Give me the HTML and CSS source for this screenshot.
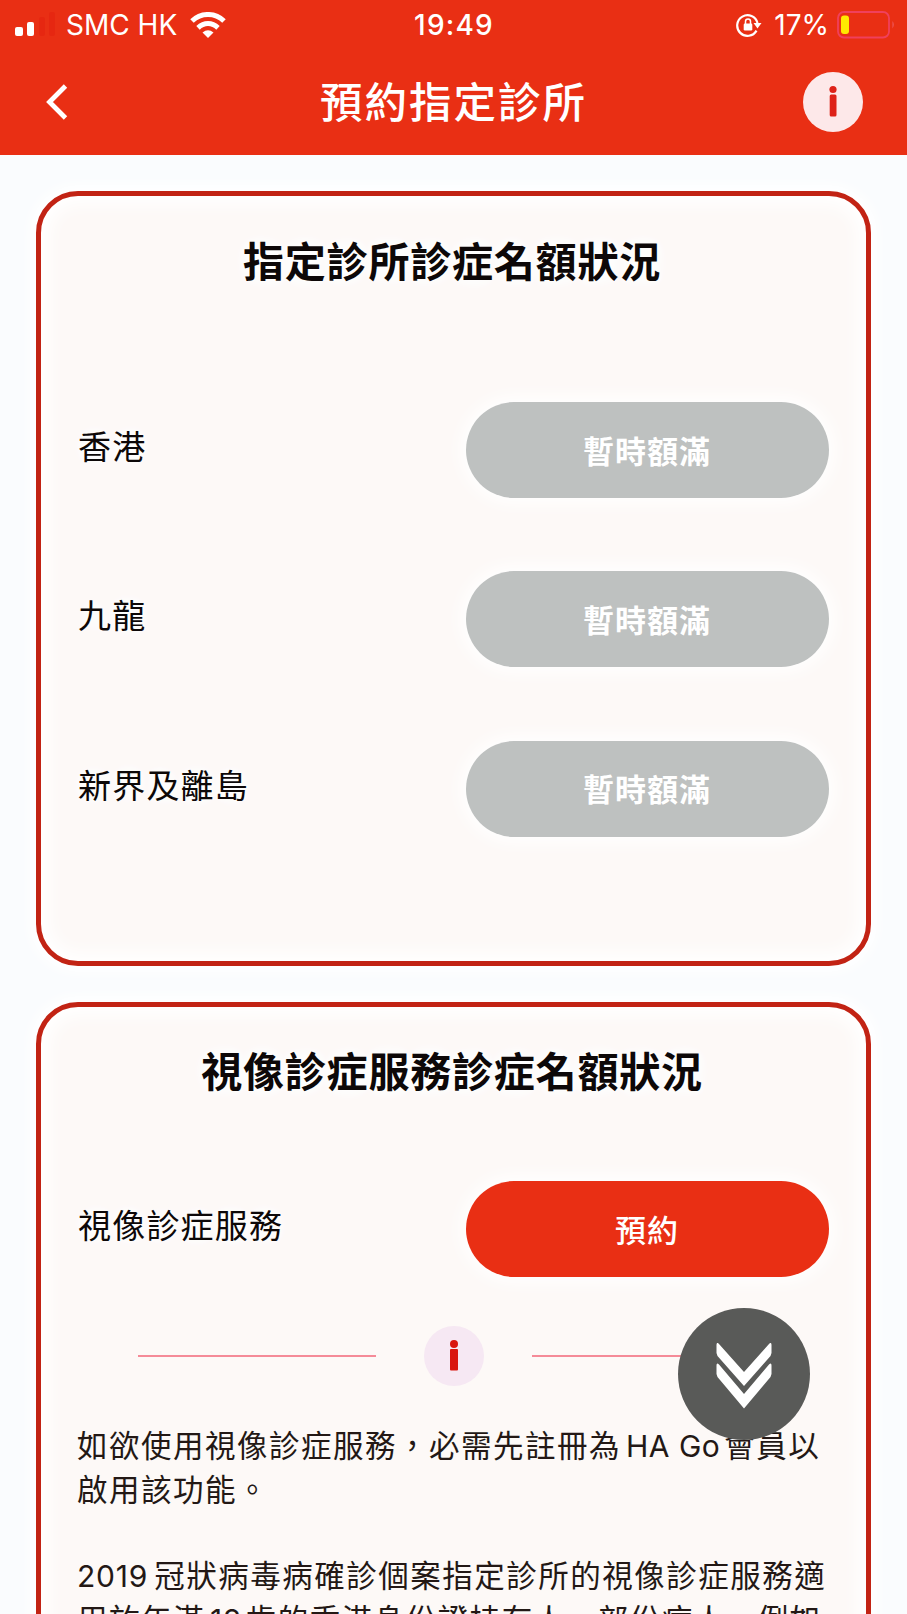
FILE: index.html
```html
<!DOCTYPE html>
<html lang="zh-Hant-HK">
<head>
  <meta charset="UTF-8" />
  <meta name="viewport" content="width=device-width, initial-scale=1.0" />
  <title>預約指定診所</title>
  <link rel="stylesheet" href="styles.css">
</head>
<body>
  <header class="header">
    <div class="status-bar">
      <div class="status-left">
        <svg class="signal" width="42" height="26" viewBox="0 0 42 26">
          <rect x="0" y="15" width="8" height="9" rx="2" fill="#fff" />
          <rect x="12" y="10" width="7" height="14" rx="2" fill="#fff" />
          <rect x="24" y="5" width="6" height="19" rx="2" fill="#e62711" />
          <rect x="34" y="0" width="6" height="24" rx="2" fill="#e62711" />
        </svg>
        <span class="carrier">SMC HK</span>
        <svg class="wifi" width="36" height="26" viewBox="0 0 36 26">
          <path d="M2 9 C11 .3 25 .3 34 9" fill="none" stroke="#fff" stroke-width="5" />
          <path d="M8 15.8 C14 10.2 22 10.2 28 15.8" fill="none" stroke="#fff" stroke-width="5" />
          <path d="M12.5 20.5 Q18 16 23.5 20.5 L18 26 Z" fill="#fff" />
        </svg>
      </div>
      <span class="time">19:49</span>
      <div class="status-right">
        <svg class="lock" width="26" height="24" viewBox="0 0 26 24">
          <path d="M20.5 17.6 A10.3 10.3 0 1 1 21.5 10" fill="none" stroke="#fff" stroke-width="2.2" />
          <path d="M17.5 10 H25.5 L21.5 15.5 Z" fill="#fff" />
          <rect x="7.7" y="10.5" width="8.6" height="7" rx="1.2" fill="#fff" />
          <path d="M9.5 11 V8.5 A2.5 2.5 0 0 1 14.5 8.5 V11" fill="none" stroke="#fff" stroke-width="1.5" />
        </svg>
        <span class="percent">17%</span>
        <svg class="battery" width="58" height="28" viewBox="0 0 58 28">
          <rect x="1" y="1" width="51" height="25.5" rx="6" fill="none" stroke="#f0405c" stroke-width="1.8" />
          <rect x="4" y="4.5" width="8" height="18.5" rx="3" fill="#ffe900" />
          <path d="M55.5 10 Q58 13.7 55.5 17.5 Z" fill="#ee5a60" />
        </svg>
      </div>
    </div>
    <nav class="nav">
      <svg class="back" width="22" height="36" viewBox="0 0 22 36">
        <path d="M19.5 2 L3.5 18 L19.5 34" fill="none" stroke="#fff" stroke-width="4.8" />
      </svg>
      <h1>預約指定診所</h1>
      <svg class="info-btn" width="60" height="60" viewBox="0 0 60 60">
        <circle cx="30" cy="30" r="30" fill="#fde8e9" />
        <circle cx="30" cy="17.5" r="3.6" fill="#de2118" />
        <rect x="26.7" y="22.5" width="6.8" height="22" rx="1.5" fill="#de2118" />
      </svg>
    </nav>
  </header>

  <main class="content">
    <section class="card">
      <h2>指定診所診症名額狀況</h2>
      <div class="rows">
        <div class="row">
          <span class="label">香港</span>
          <button class="btn full" type="button">暫時額滿</button>
        </div>
        <div class="row">
          <span class="label">九龍</span>
          <button class="btn full" type="button">暫時額滿</button>
        </div>
        <div class="row">
          <span class="label">新界及離島</span>
          <button class="btn full" type="button">暫時額滿</button>
        </div>
      </div>
    </section>

    <section class="card video">
      <h2>視像診症服務診症名額狀況</h2>
      <div class="rows">
        <div class="row">
          <span class="label">視像診症服務</span>
          <button class="btn book" type="button">預約</button>
        </div>
      </div>
      <div class="divider">
        <span class="line"></span>
        <svg width="60" height="60" viewBox="0 0 60 60">
          <circle cx="30" cy="30" r="30" fill="#f6e8f3" />
          <circle cx="30" cy="18" r="4" fill="#d9170f" />
          <rect x="26" y="23" width="8" height="21.5" rx="1" fill="#d9170f" />
        </svg>
        <span class="line"></span>
      </div>
      <div class="notes">
        <p>如欲使用視像診症服務，必需先註冊為<span class="en">HA Go</span>會員以<br>啟用該功能。</p>
        <p><span class="en first">2019</span>冠狀病毒病確診個案指定診所的視像診症服務適<br>用於年滿<span class="en">18</span>歲的香港身份證持有人。部份病人，例如</p>
      </div>
    </section>
  </main>

  <!-- scroll down button -->
  <button class="scroll-down" type="button" aria-label="向下">
    <svg width="56" height="66" viewBox="0 0 56 66">
      <path d="M.5 2 Q.5 -1.5 3 1 L28 29 L53 1 Q55.5 -1.5 55.5 2 V10 L54.5 13 L28 43 L1.5 13 L.5 10 Z" fill="#fff" />
      <path d="M.5 22.5 Q.5 19 3 21.5 L28 51 L53 21.5 Q55.5 19 55.5 22.5 V31 L54.5 34 L28 65.5 L1.5 34 L.5 31 Z" fill="#fff" />
    </svg>
  </button>
</body>
</html>
```

FILE: styles.css
```css
* {
  box-sizing: border-box;
}
body {
  font-family: "Noto Sans CJK TC", sans-serif;
  background: #fafcfe;
  margin: 0;
  height: 1614px;
  overflow: hidden;
  color: #0d0808;
}
h1, h2, p {
  margin: 0;
}
svg {
  display: block;
  flex: none;
}
button {
  border: none;
  padding: 0;
  font-family: inherit;
  cursor: pointer;
}

/* header */
.header {
  height: 155px;
  background: #e92f14;
  color: white;
}
.status-bar {
  display: grid;
  grid-template-columns: 1fr auto 1fr;
  align-items: center;
  height: 49px;
  padding: 0 12px 0 15px;
  font-family: Inter, sans-serif;
  font-size: 28px;
  line-height: 47px;
}
.status-left, .status-right {
  display: flex;
  align-items: center;
}
.status-right {
  justify-content: flex-end;
}
.signal {
  margin-right: 9px;
}
.carrier, .time, .percent {
  padding-top: 2px;
}
.wifi {
  margin-left: 13px;
}
.time {
  font-weight: 500;
  letter-spacing: 1.2px;
  padding-right: 2px;
}
.percent {
  margin: 0 8px 0 12px;
}
.nav {
  display: flex;
  align-items: center;
  justify-content: space-between;
  height: 105px;
  padding: 0 44px 0 46px;
}
.back {
  margin-right: 38px;
}
h1 {
  font-size: 42.5px;
  font-weight: 500;
  letter-spacing: 2px;
  line-height: 60px;
  padding-right: 2px;
  padding-bottom: 3px;
}

/* cards */
.content {
  padding: 36px;
}
.card {
  height: 775px;
  padding: 33px 37px;
  border: 5px solid #c22314;
  border-radius: 42px;
  background: #fdf9f7;
  box-shadow: inset 0 0 18px 8px #fff, 0 0 14px 6px #fff;
}
.card.video {
  margin-top: 36px;
  padding-top: 32px;
}
h2 {
  font-size: 41px;
  font-weight: 700;
  letter-spacing: 0.8px;
  line-height: 60px;
  padding-right: 3px;
  text-align: center;
  white-space: nowrap;
  text-shadow: 0 0 12px #fff, 0 0 16px #fff, 0 0 20px #fff;
}
.rows {
  display: flex;
  flex-direction: column;
  gap: 73.4px;
  margin-top: 113px;
}
.video .rows {
  margin-top: 82px;
}
.row {
  display: flex;
  align-items: center;
  justify-content: space-between;
  height: 96px;
}
.label {
  font-size: 33px;
  letter-spacing: 1.2px;
  line-height: 48px;
  padding-bottom: 10px;
  text-shadow: 0 0 12px #fff, 0 0 16px #fff, 0 0 20px #fff;
}
.btn {
  width: 363px;
  height: 96px;
  border-radius: 48px;
  color: white;
  font-size: 31px;
  letter-spacing: 1px;
  line-height: 46px;
  padding: 0 1px 1px 0;
  box-shadow: 0 0 18px 5px #fff;
}
.full {
  background: #bec1c0;
  font-weight: 700;
}
.book {
  background: #e92f14;
  font-weight: 500;
}

.divider {
  display: flex;
  align-items: center;
  justify-content: center;
  gap: 48px;
  margin-top: 49px;
}
.line {
  width: 238px;
  height: 2px;
  background: #f58b98;
}
.notes {
  margin-top: 37px;
  margin-left: -1px;
  font-size: 30.5px;
  letter-spacing: 1.5px;
  line-height: 43.5px;
  white-space: nowrap;
  color: #231815;
}
.notes p + p {
  margin-top: 43px;
}
.en {
  font-family: Inter, sans-serif;
  font-size: 30px;
  letter-spacing: 0.5px;
  line-height: 1;
  margin: 0 4px 0 5px;
}
.en.first {
  margin-left: 0;
  margin-right: 6px;
  letter-spacing: 0.8px;
}

.scroll-down {
  position: fixed;
  left: 678px;
  top: 1308px;
  width: 132px;
  height: 132px;
  border-radius: 50%;
  background: #595a58;
  display: flex;
  align-items: center;
  justify-content: center;
  padding-top: 4px;
}
```
